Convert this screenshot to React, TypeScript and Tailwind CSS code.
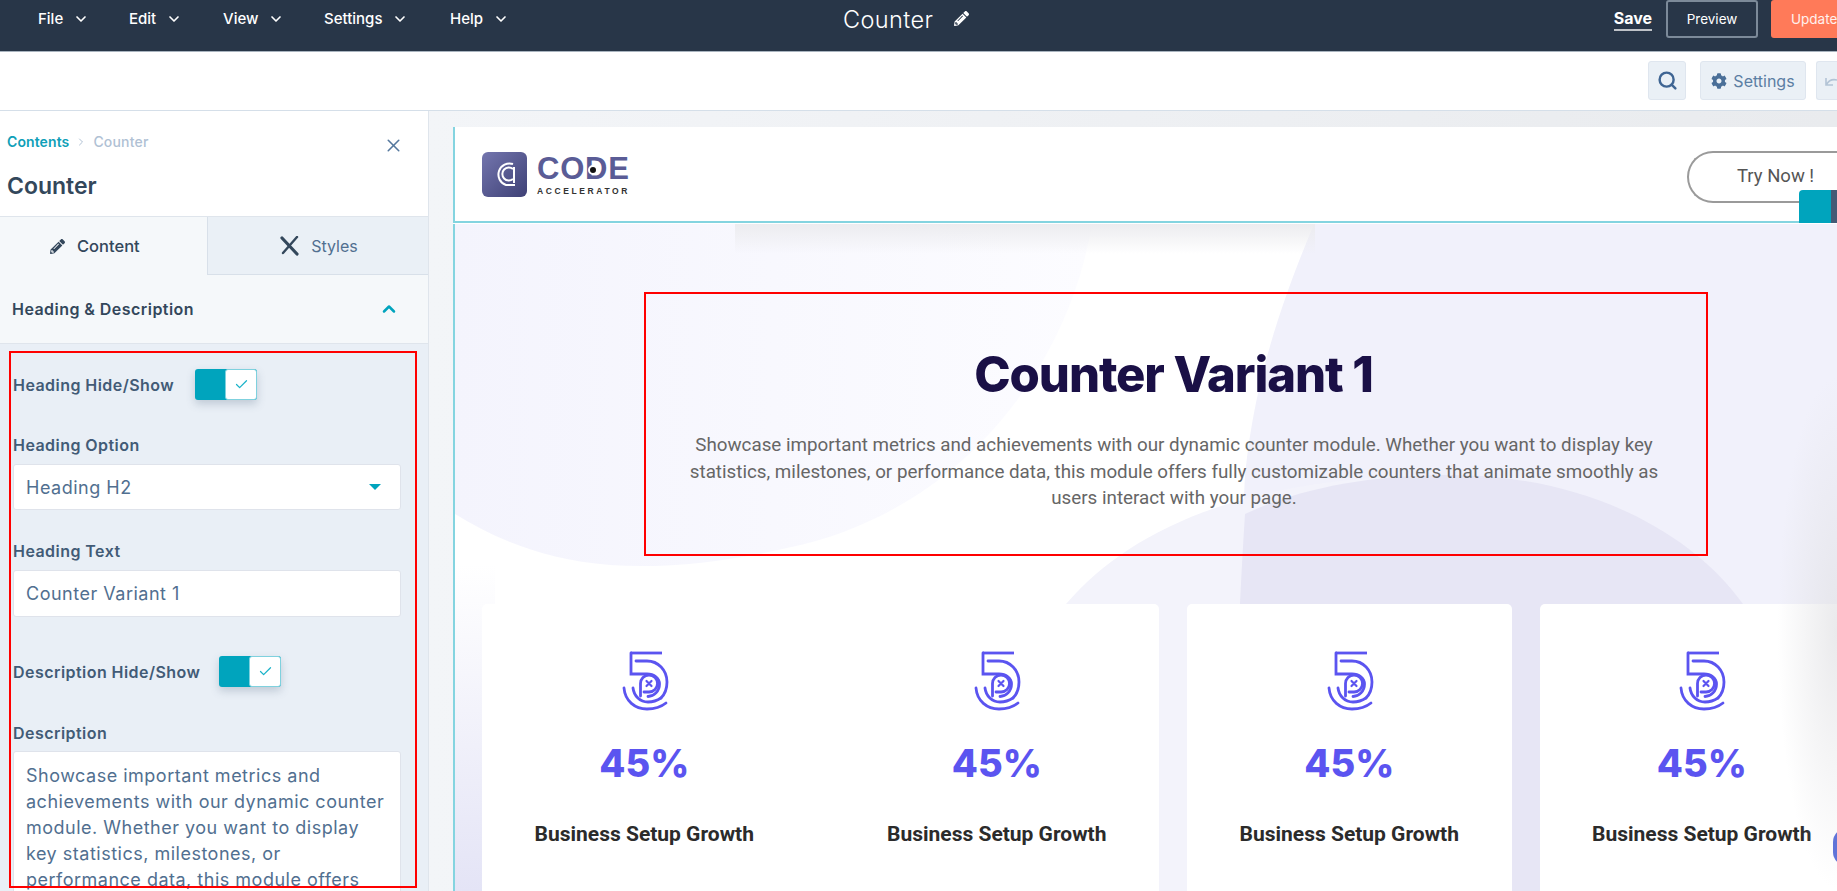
import { Check, ChevronDown, ChevronUp, ChevronRight, Search, X } from "lucide-react";
import { FaCog, FaPencilAlt } from "react-icons/fa";

const MENU = [
  { label: "File", width: "w-[91px]" },
  { label: "Edit", width: "w-[94px]" },
  { label: "View", width: "w-[101px]" },
  { label: "Settings", width: "w-[126px]" },
  { label: "Help", width: "w-[70px]" },
];

const DESCRIPTION =
  "Showcase important metrics and achievements with our dynamic counter module. Whether you want to display key statistics, milestones, or performance data, this module offers fully customizable counters that animate smoothly as users interact with your page.";

function TopBar() {
  return (
    <header className="flex h-[52px] items-start border-b border-[#a9b4bf] bg-[#283648] text-white">
      <nav className="ml-[38px] flex h-[38px] items-center">
        {MENU.map((item) => (
          <div key={item.label} className={`flex items-center gap-[10px] text-[15px] font-medium ${item.width}`}>
            {item.label}
            <ChevronDown className="size-[16px]" strokeWidth={2.5} />
          </div>
        ))}
      </nav>
      <div className="ml-[323px] flex h-[40px] items-center gap-[21px]">
        <span className="text-[23.5px] font-light tracking-[0.4px]">Counter</span>
        <FaPencilAlt className="mb-[4px] size-[15px]" />
      </div>
      <div className="ml-auto flex items-center">
        <span className="mr-[14px] border-b-2 border-white/70 text-[16px] leading-[21px] font-bold">Save</span>
        <div className="flex h-[38px] w-[92px] items-center justify-center rounded-[3px] border-2 border-[#7c8a99] text-[13.5px]">
          Preview
        </div>
        <div className="ml-[13px] flex h-[38px] w-[66px] items-center overflow-hidden rounded-l-[3px] bg-[#ff7a59] pl-[20px] text-[13.5px] text-white/90">
          Update
        </div>
      </div>
    </header>
  );
}

function SubBar() {
  return (
    <div className="flex h-[59px] items-start justify-end border-b border-[#d5dfe9] bg-white pt-[9px]">
      <button className="flex h-[39px] w-[38px] items-center justify-center rounded-[3px] border border-[#dfe6ef] bg-[#eaf0f6] text-[#3f6593]">
        <Search className="size-[21px]" strokeWidth={2.8} />
      </button>
      <button className="ml-[14px] flex h-[39px] w-[106px] items-center justify-center gap-[6px] rounded-[3px] border border-[#dfe6ef] bg-[#eaf0f6] text-[16px] text-[#5b7ea3]">
        <FaCog className="size-[16px] text-[#4a6f98]" />
        Settings
      </button>
      <button className="ml-[10px] flex h-[39px] w-[21px] items-start justify-start rounded-l-[3px] border border-r-0 border-[#dfe6ef] bg-[#eaf0f6] pt-[14px] pl-[8px]">
        <svg width="12" height="11" viewBox="0 0 12 11" fill="none" stroke="#b3c4d6" strokeWidth="1.6">
          <path d="M1 2v7h7M1.5 8.5C4 4 8 3 12 4" />
        </svg>
      </button>
    </div>
  );
}

function Toggle({ className }: { className: string }) {
  return (
    <div className={`flex h-[31px] w-[62px] shrink-0 items-stretch rounded-[3px] bg-[#00a4bd] shadow-[0_4px_8px_rgba(66,91,118,0.25)] ${className}`}>
      <span className="flex-1" />
      <span className="flex w-[32px] items-center justify-center rounded-[3px] border-[1.5px] border-[#7fd1de] bg-white text-[#1bb3c9]">
        <Check className="size-[15px]" strokeWidth={2} />
      </span>
    </div>
  );
}

function Label({ children }: { children: React.ReactNode }) {
  return <div className="text-[16px] leading-[22px] font-semibold tracking-[0.45px] whitespace-nowrap text-[#425b76]">{children}</div>;
}

function Sidebar() {
  return (
    <aside className="relative h-full w-[429px] shrink-0 overflow-hidden border-r border-[#dfe5ec] bg-[#e9eff6]">
      <div className="relative h-[106px] border-b border-[#dfe5ec] bg-white px-[7px] pt-[22px]">
        <div className="flex items-center text-[14px] leading-[18px]">
          <span className="font-semibold tracking-[0.1px] text-[#0f9fb8]">Contents</span>
          <ChevronRight className="mx-[6px] size-[12px] text-[#b0c1d4]" />
          <span className="font-medium tracking-[0.2px] text-[#b0c1d4]">Counter</span>
        </div>
        <div className="mt-[20px] text-[23px] leading-[30px] font-semibold text-[#33475b]">Counter</div>
        <X className="absolute top-[24px] right-[24px] size-[21px] text-[#55789e]" strokeWidth={1.8} />
      </div>
      <div className="flex h-[58px] bg-[#f5f8fa]">
        <div className="flex w-[207px] items-center gap-[12px] pl-[50px] text-[16.5px] font-medium text-[#33475b]">
          <FaPencilAlt className="size-[15px]" />
          Content
        </div>
        <div className="flex flex-1 items-center justify-center gap-[11px] border-b border-l border-[#d8e0e9] bg-[#eaf0f6] pl-[2px] text-[16px] text-[#516f90]">
          <svg width="20" height="20" viewBox="0 0 20 20" stroke="#33475b" fill="none" strokeLinecap="round">
            <path d="M2 2l15 16" strokeWidth="3.2" />
            <path d="M17 1L3 17" strokeWidth="2.4" />
          </svg>
          Styles
        </div>
      </div>
      <div className="flex h-[69px] items-center justify-between border-b border-[#dfe5ec] bg-[#f5f8fa] pr-[29px] pl-[12px]">
        <span className="text-[16px] font-semibold tracking-[0.45px] text-[#33475b]">Heading &amp; Description</span>
        <ChevronUp className="size-[20px] text-[#00a4bd]" strokeWidth={3} />
      </div>

      <div className="px-[13px] pt-[25px]">
        <div className="flex items-center">
          <Label>Heading Hide/Show</Label>
          <Toggle className="ml-[21px]" />
        </div>
        <div className="mt-[34px]">
          <Label>Heading Option</Label>
          <div className="mt-[8px] flex h-[46px] w-[388px] items-center justify-between rounded-[3px] border border-[#dfe3eb] bg-white pr-[19px] pl-[12px] text-[18px] tracking-[0.5px] text-[#516f90]">
            Heading H2
            <span className="h-0 w-0 border-x-[6px] border-t-[6px] border-x-transparent border-t-[#00a4bd]" />
          </div>
        </div>
        <div className="mt-[30px]">
          <Label>Heading Text</Label>
          <div className="mt-[8px] flex h-[47px] w-[388px] items-center rounded-[3px] border border-[#dfe3eb] bg-white pl-[12px] text-[18px] tracking-[0.5px] text-[#516f90]">
            Counter Variant 1
          </div>
        </div>
        <div className="mt-[39px] flex items-center">
          <Label>Description Hide/Show</Label>
          <Toggle className="ml-[19px]" />
        </div>
        <div className="mt-[35px]">
          <Label>Description</Label>
          <div className="mt-[7px] h-[200px] w-[388px] rounded-[3px] border border-[#dfe3eb] bg-white pt-[11px] pr-[12px] pl-[12px] text-[18px] leading-[26px] tracking-[0.5px] text-[#516f90]">
            {DESCRIPTION}
          </div>
        </div>
      </div>

      {/* annotation box drawn over the form */}
      <div className="pointer-events-none absolute top-[240px] left-[9px] h-[537px] w-[408px] border-2 border-[#ff0000]" />
    </aside>
  );
}

function Logo() {
  return (
    <div className="flex items-center">
      <div className="flex size-[45px] items-center justify-center rounded-[6px] bg-gradient-to-br from-[#7476ae] to-[#3f4176]">
        <svg width="28" height="32" viewBox="0 0 28 32" fill="none" stroke="#fff" strokeWidth="2">
          <path d="M24 27H15A11 11 0 1 1 22 6" />
          <path d="M22 11A6.5 6.5 0 1 0 22 21" />
          <path d="M23 9V25" />
        </svg>
      </div>
      <div className="mt-[2px] ml-[10px] flex w-[92px] flex-col">
        <div className="relative text-[31px] leading-[28px] font-bold tracking-[0.8px] text-[#5a5c96] [font-family:'Liberation_Sans',sans-serif]">
          CODE
          <span className="absolute top-[10px] left-[51px] size-[10px] rounded-full border-[2px] border-white bg-[#111]" />
        </div>
        <div className="mt-[3px] text-[8.5px] leading-[10px] font-bold tracking-[2.6px] whitespace-nowrap text-[#333] [font-family:'Liberation_Sans',sans-serif]">
          ACCELERATOR
        </div>
      </div>
    </div>
  );
}

function FiveIcon() {
  return (
    <svg className="ml-[3px]" width="60" height="70" viewBox="0 0 60 70" fill="none" stroke="#5b54f0" strokeWidth="2.8" strokeLinecap="round">
      <path d="M15 7H46" strokeLinecap="butt" />
      <path d="M15 7V28H31C38 28 43.5 32 43.5 38C43.5 45 38 50.5 32 50.5" />
      <path d="M24.5 50V37.5A8.5 8.5 0 1 1 33 46H28" />
      <path d="M20 15H31C42 15 51 24 51 36C51 44 48 49 45 52" />
      <path d="M17 42C18 50 24 56 32 56C38 56 42 54 45 52" />
      <path d="M8 42C9 55 19 63 31 63C38 63 45 61 50 57" />
      <path d="M30.5 35L35.5 40M35.5 35L30.5 40" strokeWidth="2.2" />
    </svg>
  );
}

function StatCard() {
  return (
    <div className="relative flex h-[300px] w-[324.5px] shrink-0 flex-col items-center rounded-[5px] bg-white pt-[42px]">
      <FiveIcon />
      <div className="mt-[22px] text-[38px] leading-[50px] font-extrabold text-[#5b54f0] [font-family:Inter,sans-serif]">45%</div>
      <div className="mt-[32px] text-[21px] leading-[28px] font-bold text-[#2b2b2b] [font-family:Roboto,sans-serif]">
        Business Setup Growth
      </div>
    </div>
  );
}

function Backdrop() {
  return (
    <svg className="absolute inset-0" width="1383" height="667" viewBox="0 0 1383 667" fill="none">
      <defs>
        <linearGradient id="blob" x1="0" x2="1" y1="0" y2="0">
          <stop offset="0" stopColor="#f4f4fd" />
          <stop offset="1" stopColor="#fcfcff" />
        </linearGradient>
        <linearGradient id="edge" x1="0" x2="0" y1="0" y2="1">
          <stop offset="0" stopColor="#e4e4f6" stopOpacity="0" />
          <stop offset="1" stopColor="#e4e4f6" />
        </linearGradient>
        <linearGradient id="topShade" x1="0" x2="0" y1="0" y2="1">
          <stop offset="0" stopColor="#ececef" />
          <stop offset="1" stopColor="#ececef" stopOpacity="0" />
        </linearGradient>
      </defs>
      <rect width="1383" height="667" fill="#ffffff" />
      <path d="M0 0H637C612 150 500 290 332 324C270 338 210 345 155 341C90 336 40 315 0 290Z" fill="url(#blob)" />
      <path d="M859 0H1383V667H781C778 520 783 400 790 251C800 150 830 70 859 0Z" fill="#f1f1fb" />
      <path d="M611 380C680 300 800 251 996 251C1120 251 1230 300 1288 380L1383 520V667H560C565 560 580 440 611 380Z" fill="#f3f3fb" />
      <path d="M781 667C778 520 783 400 790 290C850 262 920 251 996 251C1120 251 1230 300 1288 380L1383 520V667Z" fill="#e7e6f5" />
      <path d="M0 340H40V667H0Z" fill="url(#edge)" />
      <rect x="280" width="580" height="30" fill="url(#topShade)" />
    </svg>
  );
}

function Preview() {
  return (
    <div className="flex h-full flex-col bg-white">
      <div className="relative flex h-[96px] shrink-0 items-center justify-between border-b-2 border-l-2 border-[#84d4e0] bg-white pl-[27px]">
        <Logo />
        <div className="mt-[6px] -mr-[40px] flex h-[52px] w-[190px] items-center rounded-l-full border-y-2 border-l-2 border-[#9a9a9a] pl-[48px] text-[18.5px] text-[#555] [font-family:Roboto,sans-serif]">
          Try Now !
        </div>
        <div className="absolute right-0 -bottom-[2px] flex h-[33px] w-[38px] overflow-hidden rounded-tl-[4px]">
          <span className="w-[32px] bg-[#00a4bd]" />
          <span className="flex-1 bg-[#425b76]" />
        </div>
      </div>
      <div className="relative mt-[1px] flex-1 overflow-hidden border-l-2 border-[#84d4e0]">
        <Backdrop />
        <div className="relative">
          <div className="mt-[68px] ml-[189px] flex h-[264px] w-[1064px] flex-col items-center border-2 border-[#ff0000]">
            <h2 className="mt-[51px] pr-[5px] text-[49px] leading-[60px] font-extrabold tracking-[-1.1px] text-[#1a1046] [font-family:Inter,sans-serif]">Counter Variant 1</h2>
            <p className="mt-[27px] mr-[4px] w-[985px] text-center text-[18.8px] leading-[26.5px] text-[#666] [font-family:Roboto,sans-serif]">
              {DESCRIPTION}
            </p>
          </div>
          <div className="mt-[48px] flex gap-[28px] pl-[27px]">
            <StatCard />
            <StatCard />
            <StatCard />
            <StatCard />
          </div>
        </div>
        {/* soft shadow and chat bubble peeking in from the right edge */}
        <div className="absolute top-[150px] right-0 bottom-0 w-[60px] bg-[radial-gradient(ellipse_at_right,rgba(225,225,228,0.7),transparent_70%)]" />
        <div className="absolute top-[604px] -right-[24px] h-[38px] w-[28px] rounded-full bg-[#6074d8]" />
      </div>
    </div>
  );
}

export default function App() {
  return (
    <div className="h-[891px] w-full overflow-hidden bg-white [font-family:Inter,sans-serif]">
      <TopBar />
      <SubBar />
      <main className="flex h-[780px]">
        <Sidebar />
        <div className="min-w-0 flex-1 bg-gradient-to-r from-[#f3f5f8] to-[#e9ebee] pt-[16px] pl-[24px]">
          <Preview />
        </div>
      </main>
    </div>
  );
}
